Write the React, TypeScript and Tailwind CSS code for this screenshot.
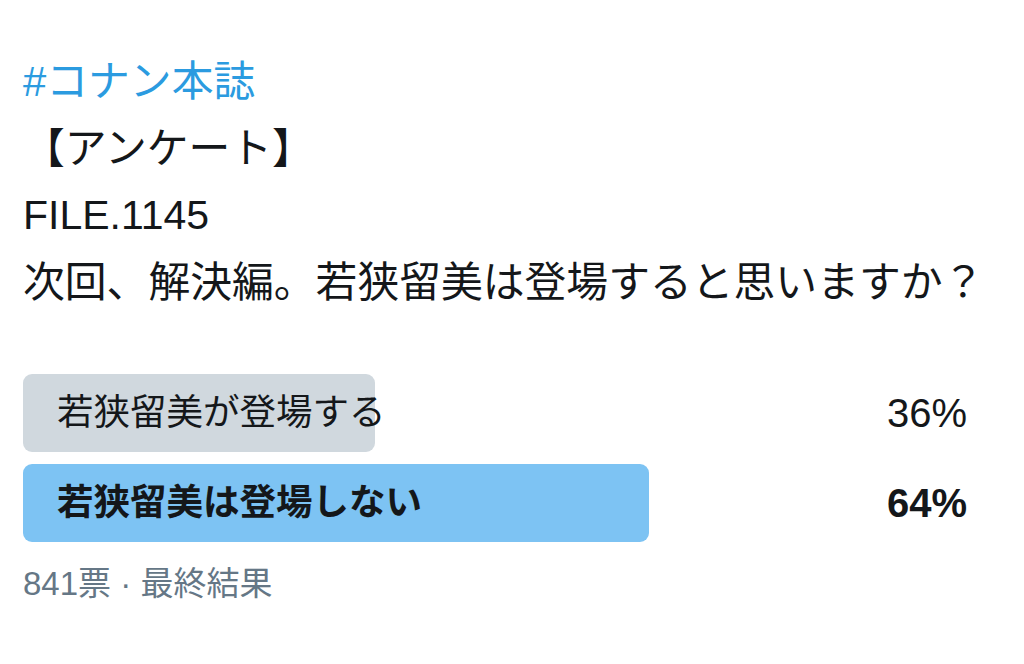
import React from "react";

const options = [
  { label: "若狭留美が登場する", pct: 36, width: 352, winner: false },
  { label: "若狭留美は登場しない", pct: 64, width: 626, winner: true },
];

export default function App() {
  return (
    <div
      className="min-h-[664px] w-[1024px] bg-white px-[23px] pt-[48px] text-[#14171a]"
      style={{ fontFamily: '"Liberation Sans", "Noto Sans CJK JP", sans-serif' }}
    >
      {/* tweet body */}
      <div className="text-[41.8px] leading-[67px]">
        <div className="text-[#2b9be0]">#コナン本誌</div>
        <div>【アンケート】</div>
        <div className="text-[41px]">FILE.1145</div>
        <div>次回、解決編。若狭留美は登場すると思いますか？</div>
      </div>

      {/* poll */}
      <div className="mt-[58px] flex flex-col gap-[12px]">
        {options.map((o) => (
          <div
            key={o.label}
            className={`relative flex h-[78px] items-center justify-between pl-[34px] pr-[34px] ${
              o.winner ? "font-bold" : ""
            }`}
          >
            <div
              className={`absolute inset-y-0 left-0 rounded-[9px] ${
                o.winner ? "bg-[#7dc3f3]" : "bg-[#d0d8de]"
              }`}
              style={{ width: o.width }}
            />
            <span className="relative text-[36.5px]">{o.label}</span>
            <span className="relative text-[40px]">{o.pct}%</span>
          </div>
        ))}
      </div>

      <div className="mt-[22px] text-[33px] leading-[40px] text-[#657786]">
        841票 · 最終結果
      </div>
    </div>
  );
}
